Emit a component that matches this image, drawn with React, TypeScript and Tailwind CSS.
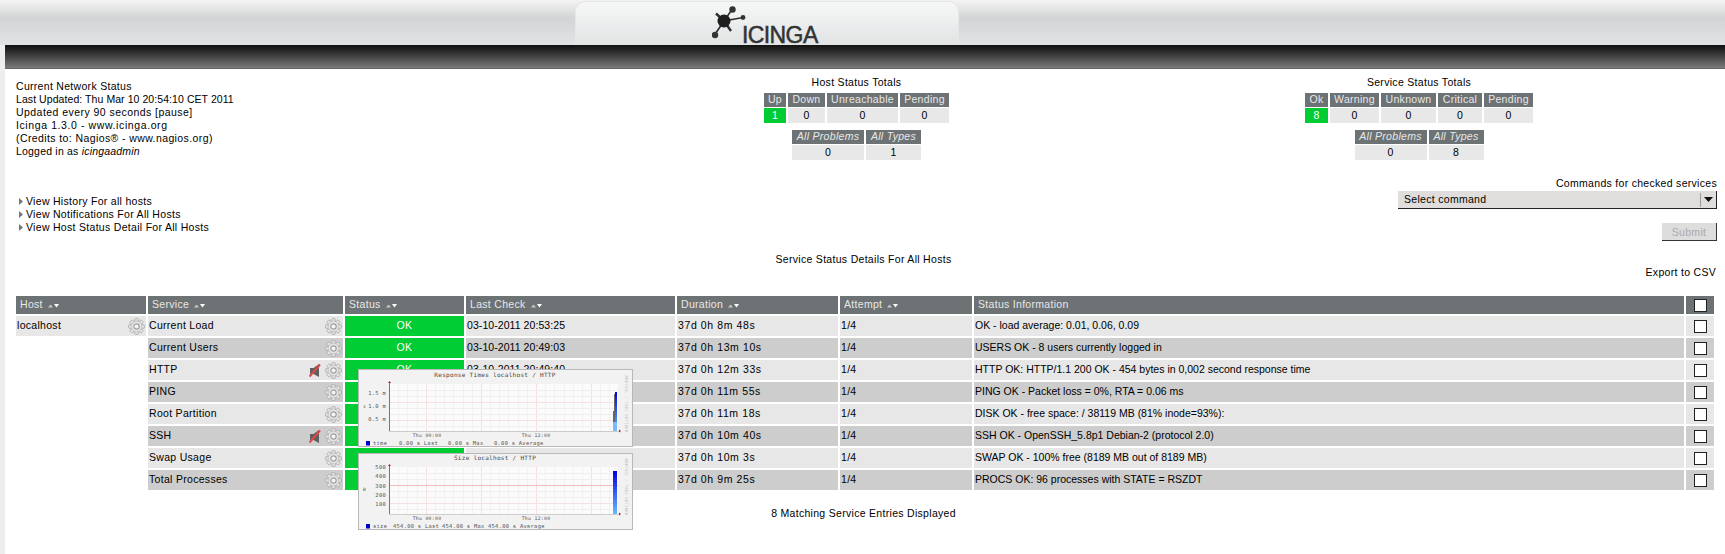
const serviceRows = [
  { service: "Current Load", check: "03-10-2011 20:53:25", duration: "37d 0h 8m 48s", info: "OK - load average: 0.01, 0.06, 0.09" },
  { service: "Current Users", check: "03-10-2011 20:49:03", duration: "37d 0h 13m 10s", info: "USERS OK - 8 users currently logged in" },
  { service: "HTTP", check: "03-10-2011 20:49:40", duration: "37d 0h 12m 33s", info: "HTTP OK: HTTP/1.1 200 OK - 454 bytes in 0,002 second response time", muted: true },
  { service: "PING", check: "03-10-2011 20:50:18", duration: "37d 0h 11m 55s", info: "PING OK - Packet loss = 0%, RTA = 0.06 ms" },
  { service: "Root Partition", check: "03-10-2011 20:51:55", duration: "37d 0h 11m 18s", info: "DISK OK - free space: / 38119 MB (81% inode=93%):" },
  { service: "SSH", check: "03-10-2011 20:43:30", duration: "37d 0h 10m 40s", info: "SSH OK - OpenSSH_5.8p1 Debian-2 (protocol 2.0)", muted: true },
  { service: "Swap Usage", check: "03-10-2011 20:44:07", duration: "37d 0h 10m 3s", info: "SWAP OK - 100% free (8189 MB out of 8189 MB)" },
  { service: "Total Processes", check: "03-10-2011 20:44:45", duration: "37d 0h 9m 25s", info: "PROCS OK: 96 processes with STATE = RSZDT" },
];

const headers = ["Host", "Service", "Status", "Last Check", "Duration", "Attempt", "Status Information"];

function SortArrows() {
  return (
    <svg width="11" height="5" viewBox="0 0 11 5" className="ml-[5px] inline-block">
      <path d="M0 4.5 L2.5 1.5 L5 4.5 Z" fill="#c4c8c8" />
      <path d="M6 1 L11 1 L8.5 4.5 Z" fill="#ffffff" />
    </svg>
  );
}

function Gear() {
  const teeth = [0, 45, 90, 135, 180, 225, 270, 315];
  return (
    <svg width="17" height="17" viewBox="0 0 17 17" className="shrink-0">
      {teeth.map((a) => (
        <rect key={a} x="6.7" y="0.6" width="3.6" height="4" rx="0.8" fill="#e4e4e4" stroke="#a8a8a8" strokeWidth="0.8" transform={`rotate(${a} 8.5 8.5)`} />
      ))}
      <circle cx="8.5" cy="8.5" r="5.4" fill="#e4e4e4" stroke="#b0b0b0" strokeWidth="0.6" />
      <circle cx="8.5" cy="8.5" r="2.7" fill="#f4f4f4" stroke="#a0a0a0" strokeWidth="1.2" />
    </svg>
  );
}

function MutedIcon() {
  return (
    <svg width="12" height="15" viewBox="0 0 12 15" className="shrink-0 mr-[4px]">
      <path d="M1 5 H4.5 L10 1 V14 L4.5 11 H1 Z" fill="#5f5f5f" />
      <path d="M0.5 13.5 L11 1.5" stroke="#e04848" strokeWidth="2" />
    </svg>
  );
}

function IcingaLogo() {
  return (
    <div className="flex items-end h-[44px] pl-[136px]">
      <svg width="34" height="38" viewBox="0 0 34 38" className="shrink-0 mb-[2px]">
        <g stroke="#2e2e2e" strokeWidth="1.6">
          <path d="M12 15 L20 3.5" />
          <path d="M12 15 L31 11.5" />
          <path d="M12 15 L2.5 29" />
          <path d="M12 15 L4 7.5" strokeWidth="2.4" />
          <path d="M12 15 L19 25" strokeWidth="2.4" />
        </g>
        <circle cx="12" cy="15" r="6.5" fill="#1e1e1e" />
        <circle cx="20.5" cy="3.5" r="3.2" fill="#333333" />
        <circle cx="31" cy="11.5" r="2.4" fill="#333333" />
        <circle cx="3" cy="29" r="3.2" fill="#333333" />
      </svg>
      <span className="text-[23px] leading-[20px] mb-[1px] -ml-[4px] text-[#333333] font-['Liberation_Sans',sans-serif] tracking-[-0.6px] [-webkit-text-stroke:0.5px_#333333]">
        ICINGA
      </span>
    </div>
  );
}

type TotalsColumn = { label: string; value: number; w: string; up?: boolean };

function Totals({ columns, italic }: { columns: TotalsColumn[]; italic?: boolean }) {
  return (
    <div className="flex justify-center gap-[2px]">
      {columns.map((c) => (
        <div key={c.label} className={c.w}>
          <div className={`h-[14px] leading-[12px] bg-[#6d7274] text-[#e8e8e8] text-center ${italic ? "italic" : ""}`}>{c.label}</div>
          <div className={`h-[15px] mt-[1px] leading-[15px] text-center ${c.up ? "bg-[#00cc33] text-white" : "bg-[#e8e8e8]"}`}>{c.value}</div>
        </div>
      ))}
    </div>
  );
}

function Graph({ title, yLabel, ticks, legend, bars, midLine, height, plotTop }: {
  title: string;
  yLabel: string;
  ticks: { y: number; label: string }[];
  legend: { x: number; label: string }[];
  bars: { x: number; y: number; w: number; fill: string }[];
  midLine?: boolean;
  height: number;
  plotTop: number;
}) {
  const xs = [39, 48, 58, 67, 76, 85, 94, 104, 113, 122, 131, 140, 149, 159, 168, 177, 186, 195, 205, 214, 223, 232, 241, 250];
  const majors = [67, 122, 177, 232];
  const plotBottom = plotTop + 47;
  const hs = [6, 12, 18, 24, 30, 36, 42];
  return (
    <svg width="273" height={height} viewBox={`0 0 273 ${height}`} className="block">
      <defs>
        <linearGradient id={`bar${plotTop}`} x1="0" y1="0" x2="0" y2="1">
          <stop offset="0" stopColor="#0000dd" />
          <stop offset="1" stopColor="#66bbff" />
        </linearGradient>
      </defs>
      <rect x="30" y={plotTop} width="229" height="47" fill="#fbfbfb" />
      {xs.map((x) => (
        <line key={x} x1={x + 0.5} x2={x + 0.5} y1={plotTop} y2={plotBottom} stroke={majors.includes(x) ? "#f6dfdf" : "#f2f2f2"} strokeWidth="1" />
      ))}
      {hs.map((h) => (
        <line key={h} x1="30" x2="259" y1={plotTop + h + 0.5} y2={plotTop + h + 0.5} stroke={midLine && h === 18 ? "#f2bcbc" : h === 18 || h === 36 ? "#f6e2e2" : "#efefef"} strokeWidth="1" />
      ))}
      {bars.map((b, i) => (
        <rect key={i} x={b.x} y={plotTop + b.y} width={b.w} height={47 - b.y} fill={b.fill === "grad" ? `url(#bar${plotTop})` : b.fill} />
      ))}
      <line x1="30.5" x2="30.5" y1={plotTop - 2} y2={plotBottom} stroke="#777777" />
      <line x1="30" x2="260" y1={plotBottom + 0.5} y2={plotBottom + 0.5} stroke="#cccccc" />
      <path d={`M29 ${plotTop - 1} h3 l-1.5 -2 z`} fill="#aa2222" />
      <path d={`M260 ${plotBottom - 1.5} v3 l2 -1.5 z`} fill="#aa2222" />
      <g fontFamily="'DejaVu Sans Mono', monospace" fontSize="5.4" fill="#555555">
        <text x="136" y={plotTop - 7} textAnchor="middle" fontSize="6" fill="#444444">{title}</text>
        <text x="4" y={plotTop + 24} fontSize="4.6">{yLabel}</text>
        {ticks.map((t) => (
          <text key={t.label} x="27" y={plotTop + t.y + 2} textAnchor="end">{t.label}</text>
        ))}
        <text x="68" y={plotBottom + 6} textAnchor="middle" fontSize="4.8">Thu 00:00</text>
        <text x="177" y={plotBottom + 6} textAnchor="middle" fontSize="4.8">Thu 12:00</text>
        <rect x="7" y={plotBottom + 10} width="4" height="4.5" fill="#0000cc" />
        {legend.map((l) => (
          <text key={l.x} x={l.x} y={plotBottom + 14}>{l.label}</text>
        ))}
        <text x="266" y={plotTop + 20} fontSize="3.8" fill="#bbbbbb" transform={`rotate(90 266 ${plotTop + 20})`} textAnchor="middle">RRDTOOL / TOBI OETIKER</text>
      </g>
    </svg>
  );
}

export default function App() {
  return (
    <div className="min-h-screen overflow-hidden bg-white text-black text-[10.5px] font-['Liberation_Sans',Arial,sans-serif] tracking-[0.3px]">
      <header className="h-[45px] bg-gradient-to-b from-[#f4f4f4] via-[#d3d4d5] via-40% to-[#e2e3e4]">
        <div className="ml-[575px] w-[384px] h-[45px] mt-0 pt-[1px]">
          <div className="h-[44px] rounded-t-[10px] border border-b-0 border-[#e6e6e6] bg-gradient-to-b from-[#f6f7f7] to-[#e2e3e4]">
            <IcingaLogo />
          </div>
        </div>
      </header>

      <main className="relative border-l-[5px] border-[#eeeeee] min-h-[509px]">
        <div className="h-[24px] bg-gradient-to-b from-[#111111] to-[#7c7c7c] border-b border-[#666666]" />

        <div className="flex">
          <div className="w-[580px] ml-[11px] pt-[11px] leading-[13px] shrink-0">
            <div>Current Network Status</div>
            <div className="tracking-[0.07px]">Last Updated: Thu Mar 10 20:54:10 CET 2011</div>
            <div className="tracking-[0.45px]">Updated every 90 seconds [pause]</div>
            <div className="tracking-[0.6px]">Icinga 1.3.0 - www.icinga.org</div>
            <div className="tracking-[0.4px]">(Credits to: Nagios® - www.nagios.org)</div>
            <div className="tracking-[0.2px]">Logged in as <i>icingaadmin</i></div>
            <ul className="mt-[37px]">
              {["View History For all hosts", "View Notifications For All Hosts", "View Host Status Detail For All Hosts"].map((t) => (
                <li key={t} className="flex items-center gap-[3px] pl-[3px]">
                  <svg width="4" height="7" viewBox="0 0 4 7"><path d="M0 0 L4 3.5 L0 7 Z" fill="#777777" /></svg>
                  {t}
                </li>
              ))}
            </ul>
          </div>

          <div className="w-[521px] shrink-0 pt-[7px]">
            <div className="text-center leading-[13px] mb-[4px]">Host Status Totals</div>
            <Totals columns={[
              { label: "Up", value: 1, w: "w-[22px]", up: true },
              { label: "Down", value: 0, w: "w-[37px]" },
              { label: "Unreachable", value: 0, w: "w-[71px]" },
              { label: "Pending", value: 0, w: "w-[49px]" },
            ]} />
            <div className="mt-[7px]">
              <Totals italic columns={[
                { label: "All Problems", value: 0, w: "w-[72px]" },
                { label: "All Types", value: 1, w: "w-[55px]" },
              ]} />
            </div>
          </div>

          <div className="w-[604px] shrink-0 pt-[7px]">
            <div className="text-center leading-[13px] mb-[4px]">Service Status Totals</div>
            <Totals columns={[
              { label: "Ok", value: 8, w: "w-[23px]", up: true },
              { label: "Warning", value: 0, w: "w-[49px]" },
              { label: "Unknown", value: 0, w: "w-[55px]" },
              { label: "Critical", value: 0, w: "w-[44px]" },
              { label: "Pending", value: 0, w: "w-[49px]" },
            ]} />
            <div className="mt-[7px]">
              <Totals italic columns={[
                { label: "All Problems", value: 0, w: "w-[72px]" },
                { label: "All Types", value: 8, w: "w-[55px]" },
              ]} />
            </div>
            <div className="pr-[4px]">
              <div className="mt-[17px] text-right leading-[13px]">Commands for checked services</div>
              <div className="ml-auto mt-[1px] w-[319px] h-[18px] flex items-center justify-between bg-[#dfdedc] border-b border-r border-[#222222] pl-[6px] leading-[17px]">
                <span>Select command</span>
                <span className="flex items-center h-[14px] border-l border-[#999999] pl-[3px] pr-[3px]">
                  <svg width="9" height="5" viewBox="0 0 9 5"><path d="M0 0 H9 L4.5 5 Z" fill="#111111" /></svg>
                </span>
              </div>
              <div className="mt-[14px] flex justify-end">
                <button disabled className="w-[55px] h-[18px] bg-[#dddddd] border-b border-r border-[#333333] text-[#aaaaaa] leading-[16px]">Submit</button>
              </div>
            </div>
          </div>
        </div>

        <div className="text-center leading-[13px] mt-[12px] ml-[-3px]">Service Status Details For All Hosts</div>
        <div className="text-right leading-[13px] pr-[9px]">Export to CSV</div>

        <table className="table-fixed border-separate border-spacing-[2px] w-[1702px] ml-[9px] mt-[15px]">
          <colgroup>
            <col className="w-[130px]" />
            <col className="w-[195px]" />
            <col className="w-[119px]" />
            <col className="w-[209px]" />
            <col className="w-[161px]" />
            <col className="w-[132px]" />
            <col className="w-[710px]" />
            <col className="w-[28px]" />
          </colgroup>
          <thead>
            <tr className="h-[18px]">
              {headers.map((h) => (
                <th key={h} className="bg-[#6d7274] text-[#e8e8e8] font-normal text-left pl-[4px] p-0">
                  {h}
                  {h !== "Status Information" && <SortArrows />}
                </th>
              ))}
              <th className="bg-[#6d7274] p-0 text-center align-middle">
                <input type="checkbox" className="appearance-none block mx-auto w-[13px] h-[13px] bg-white border border-[#222222]" />
              </th>
            </tr>
          </thead>
          <tbody>
            {serviceRows.map((r, i) => {
              const bg = i % 2 === 0 ? "bg-[#e7e7e7]" : "bg-[#cdcdcd]";
              return (
                <tr key={r.service} className="h-[20px]">
                  {i === 0 ? (
                    <td className={`${bg} p-0 pl-[1px]`}>
                      <div className="flex items-center justify-between pr-[1px]">
                        localhost
                        <Gear />
                      </div>
                    </td>
                  ) : (
                    <td className="p-0" />
                  )}
                  <td className={`${bg} p-0 pl-[1px]`}>
                    <div className="flex items-center pr-[1px]">
                      <span className="mr-auto">{r.service}</span>
                      {r.muted && <MutedIcon />}
                      <Gear />
                    </div>
                  </td>
                  <td className="bg-[#00cc33] text-white text-center p-0">OK</td>
                  <td className={`${bg} p-0 pl-[1px] tracking-[0.07px]`}>{r.check}</td>
                  <td className={`${bg} p-0 pl-[1px] tracking-[0.6px]`}>{r.duration}</td>
                  <td className={`${bg} p-0 pl-[1px]`}>1/4</td>
                  <td className={`${bg} p-0 pl-[1px] tracking-[0px]`}>{r.info}</td>
                  <td className={`${bg} p-0`}>
                    <input type="checkbox" className="appearance-none block mx-auto w-[13px] h-[13px] bg-white border border-[#222222]" />
                  </td>
                </tr>
              );
            })}
          </tbody>
        </table>

        <div className="text-center leading-[13px] mt-[15px] ml-[-3px]">8 Matching Service Entries Displayed</div>

        <div className="absolute left-[353px] top-[324px] w-[275px] border border-[#b8b8b8] bg-[#f2f2f2]">
          <Graph
            title="Response Times localhost / HTTP"
            yLabel="s"
            height={76}
            plotTop={14}
            ticks={[{ y: 9, label: "1.5 m" }, { y: 22, label: "1.0 m" }, { y: 35, label: "0.5 m" }]}
            legend={[{ x: 14, label: "time" }, { x: 40, label: "0.00 s Last" }, { x: 89, label: "0.00 s Max" }, { x: 135, label: "0.00 s Average" }]}
            bars={[
              { x: 254, y: 27, w: 2, fill: "#3366ee" },
              { x: 255, y: 10, w: 1, fill: "#666666" },
              { x: 256, y: 8, w: 2, fill: "grad" },
              { x: 254, y: 38, w: 4, fill: "#77bbff" },
            ]}
          />
        </div>
        <div className="absolute left-[353px] top-[408px] w-[275px] border border-[#b8b8b8] bg-[#f2f2f2]">
          <Graph
            title="Size localhost / HTTP"
            yLabel="B"
            height={75}
            plotTop={13}
            midLine
            ticks={[{ y: 0, label: "500" }, { y: 9, label: "400" }, { y: 19, label: "300" }, { y: 28, label: "200" }, { y: 37, label: "100" }]}
            legend={[{ x: 14, label: "size" }, { x: 34, label: "454.00 s Last" }, { x: 83, label: "454.00 s Max" }, { x: 129, label: "454.00 s Average" }]}
            bars={[{ x: 254, y: 4, w: 4, fill: "grad" }]}
          />
        </div>
      </main>
    </div>
  );
}
